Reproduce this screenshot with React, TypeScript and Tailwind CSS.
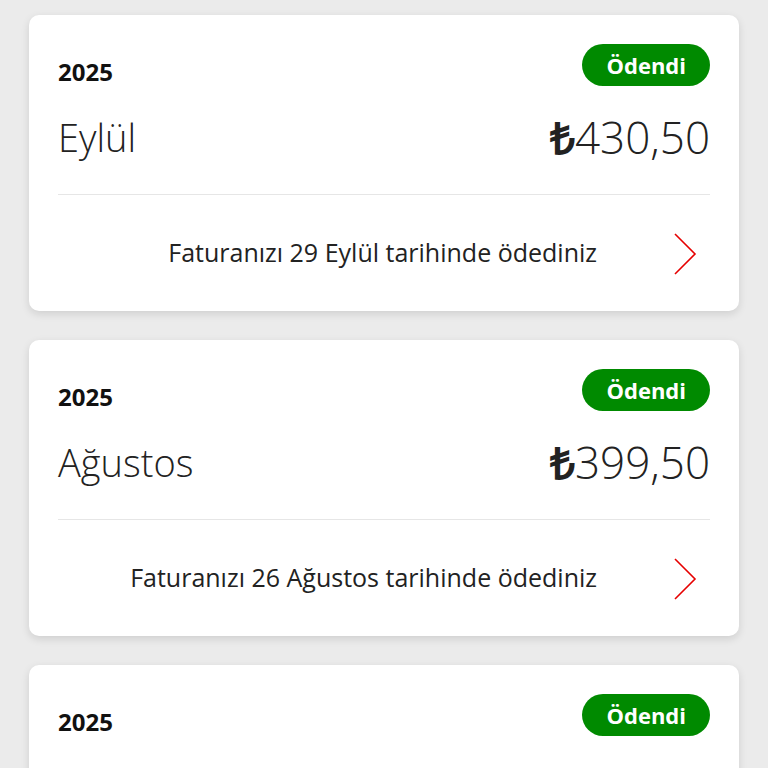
type Bill = {
  year: string
  month: string
  amount: string
  paidOn: string
}

const bills: Bill[] = [
  { year: '2025', month: 'Eylül', amount: '430,50', paidOn: '29 Eylül' },
  { year: '2025', month: 'Ağustos', amount: '399,50', paidOn: '26 Ağustos' },
  { year: '2025', month: 'Temmuz', amount: '399,50', paidOn: '28 Temmuz' }
]

function Chevron() {
  return (
    <svg width="24" height="42" viewBox="0 0 24 42" fill="none">
      <polyline
        points="2,1 22,21 2,41"
        stroke="#e60000"
        strokeWidth="1.6"
        strokeLinejoin="miter"
      />
    </svg>
  )
}

function BillCard({ year, month, amount, paidOn }: Bill) {
  return (
    <div className="h-[296px] shrink-0 overflow-hidden rounded-[10px] bg-white px-[29px] shadow-[0_3px_8px_rgba(0,0,0,0.12)]">
      <div className="flex items-start justify-between pt-[29px]">
        <span className="pt-[13px] text-[24px] font-bold leading-[30px] text-[#111]">
          {year}
        </span>
        <span className="flex h-[42px] items-center rounded-full bg-[#008a00] px-[24px] text-[22px] font-bold text-white">
          Ödendi
        </span>
      </div>
      <div className="mt-[27px] flex items-center justify-between pb-[34px]">
        <span className="text-[38px] font-light leading-[46px] text-[#222]">
          {month}
        </span>
        <span className="text-[44px] font-light leading-[46px] text-[#222]">
          <span className="font-semibold">₺</span>
          {amount}
        </span>
      </div>
      <div className="h-px bg-[#e6e6e6]" />
      <div className="flex h-[116px] items-center justify-end">
        <span className="pr-[76px] text-[25px] text-[#222]">
          Faturanızı {paidOn} tarihinde ödediniz
        </span>
        <div className="mr-[13px] pt-[2px]">
          <Chevron />
        </div>
      </div>
    </div>
  )
}

export default function App() {
  return (
    <div
      className="flex h-[768px] flex-col gap-[29px] overflow-hidden bg-[#ebebeb] px-[29px] pt-[15px]"
      style={{ fontFamily: '"Open Sans", sans-serif' }}
    >
      {bills.map((bill) => (
        <BillCard key={bill.month} {...bill} />
      ))}
    </div>
  )
}
